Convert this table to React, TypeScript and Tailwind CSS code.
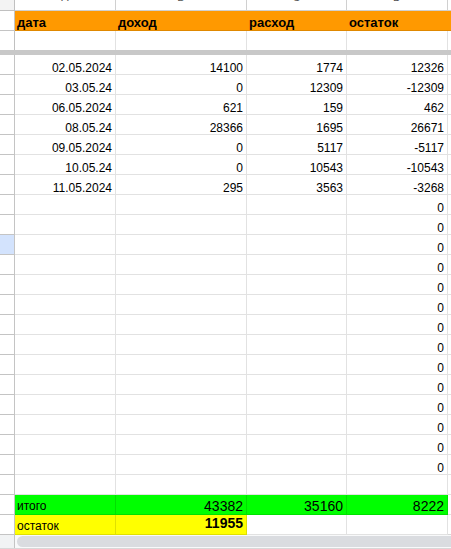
import React from "react";

type Cell = {
  text?: string;
  align?: "left" | "right";
  cls?: string;
  textCls?: string;
};

const W = ["w-[101px]", "w-[131px]", "w-[100px]", "w-[101px]"];

const dataRows: string[][] = [
  ["02.05.2024", "14100", "1774", "12326"],
  ["03.05.24", "0", "12309", "-12309"],
  ["06.05.2024", "621", "159", "462"],
  ["08.05.24", "28366", "1695", "26671"],
  ["09.05.2024", "0", "5117", "-5117"],
  ["10.05.24", "0", "10543", "-10543"],
  ["11.05.2024", "295", "3563", "-3268"],
];

function Row({
  cells,
  h = "h-[20px]",
  headCls = "bg-white",
  rowBorder = "border-b border-[#e2e2e2]",
  headBorder = "border-b border-[#c4c4c4]",
  restCls = "bg-white",
}: {
  cells: Cell[];
  h?: string;
  headCls?: string;
  rowBorder?: string;
  headBorder?: string;
  restCls?: string;
}) {
  return (
    <div className={`flex ${h} shrink-0`}>
      <div className={`w-[15px] shrink-0 border-r border-[#c0c0c0] ${headBorder} ${headCls}`} />
      {cells.map((c, i) => (
        <div
          key={i}
          className={`${W[i]} shrink-0 flex items-end overflow-hidden whitespace-nowrap ${
            c.align === "left" ? "justify-start pl-[2px]" : "justify-end pr-[3px]"
          } ${c.cls ?? `bg-white border-r border-[#e2e2e2] ${rowBorder}`}`}
        >
          {c.text ? <span className={c.textCls ?? "text-[12px] leading-[12px]"}>{c.text}</span> : null}
        </div>
      ))}
      <div className={`flex-1 ${restCls} ${rowBorder}`} />
    </div>
  );
}

export default function App() {
  const zeroRows = Array.from({ length: 14 }, (_, i) => i);
  const green = "bg-[#00ff00] border-r border-b border-[#00e000]";
  const yellow = "bg-[#ffff00] border-r border-b border-[#e0e000]";
  return (
    <div className="w-[451px] h-[549px] overflow-hidden bg-white text-black font-['Liberation_Sans',Arial,sans-serif] flex flex-col">
      {/* column letters row (mostly scrolled off) */}
      <div className="flex h-[11px] shrink-0">
        <div className="w-[15px] shrink-0 bg-[#f3f3f3] border-r border-b border-[#c0c0c0]" />
        {["A", "B", "C", "D"].map((l, i) => (
          <div
            key={l}
            className={`${W[i]} shrink-0 overflow-hidden border-r border-b border-[#d0d0d0] bg-white flex justify-center`}
          >
            <span className="text-[11px] leading-[11px] text-[#555] mt-[-8px]">{l}</span>
          </div>
        ))}
        <div className="flex-1 border-b border-[#d0d0d0]" />
      </div>

      {/* orange header */}
      <div className="flex h-[20px] shrink-0">
        <div className="w-[15px] shrink-0 bg-white border-r border-b border-[#c4c4c4]" />
        <div className="flex-1 flex bg-[#ff9900] border-b border-[#e08800]">
          {["дата", "доход", "расход", "остаток"].map((t, i) => (
            <div key={t} className={`${W[i]} shrink-0 flex items-end pl-[2px] pb-[1px]`}>
              <span className="text-[13px] leading-[13px] font-bold">{t}</span>
            </div>
          ))}
        </div>
      </div>

      {/* empty row above freeze line */}
      <Row cells={[{}, {}, {}, {}]} h="h-[19px]" rowBorder="" headBorder="" />

      {/* freeze bar */}
      <div className="h-[5px] shrink-0 bg-[#c8c8c8]" />

      {dataRows.map((r, i) => (
        <Row key={i} cells={r.map((t) => ({ text: t }))} />
      ))}

      {zeroRows.map((i) => (
        <Row
          key={"z" + i}
          headCls={i === 2 ? "bg-[#d3e3fd]" : "bg-white"}
          cells={[{}, {}, {}, { text: "0" }]}
        />
      ))}

      <Row cells={[{}, {}, {}, {}]} />

      {/* totals */}
      <Row
        cells={[
          { text: "итого", align: "left", cls: green, textCls: "text-[12px] leading-[12px] mb-[2px]" },
          { text: "43382", cls: green, textCls: "text-[14px] leading-[14px] mb-[1px]" },
          { text: "35160", cls: green, textCls: "text-[14px] leading-[14px] mb-[1px]" },
          { text: "8222", cls: green, textCls: "text-[14px] leading-[14px] mb-[1px]" },
        ]}
      />
      <Row
        cells={[
          { text: "остаток", align: "left", cls: yellow, textCls: "text-[12px] leading-[12px] mb-[2px]" },
          { text: "11955", cls: yellow, textCls: "text-[14px] leading-[14px] font-bold mb-[4px]" },
          {},
          {},
        ]}
        rowBorder="border-b border-[#d8d8d8]"
      />

      {/* horizontal scrollbar */}
      <div className="flex h-[14px] shrink-0 border-b border-[#d8d8d8]">
        <div className="w-[15px] shrink-0 bg-[#f1f3f4] border-r border-[#c4c4c4]" />
        <div className="flex-1 flex items-start pt-[1px] pl-[2px] bg-[#f8f9fa]">
          <div className="h-[11px] w-full bg-[#dadce0] rounded-l-[6px]" />
        </div>
      </div>
    </div>
  );
}
